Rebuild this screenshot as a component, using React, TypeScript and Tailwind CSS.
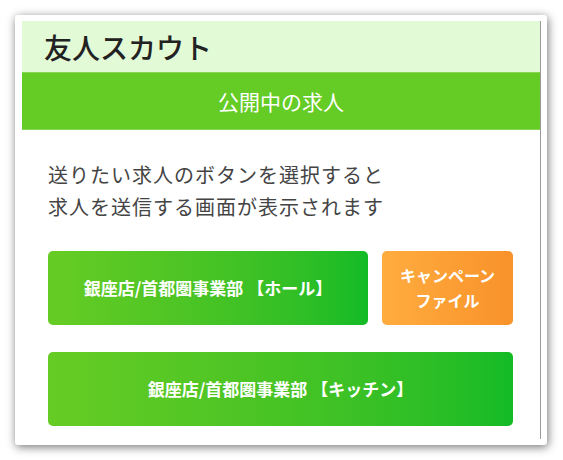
export default function App() {
  const jp = { fontFamily: '"Noto Sans CJK JP", "Noto Sans", sans-serif' };

  return (
    <div className="min-h-[460px] w-[563px] bg-white pl-[15px] pt-[15px]" style={jp}>
      <div className="h-[430px] w-[532px] rounded-[3px] bg-white pl-[7px] pt-[6px] shadow-[1px_2px_10px_rgba(0,0,0,0.55)]">
        <div className="h-[418px] w-[519px] border-r border-[#9a9a9a]">
          <div className="flex h-[51px] items-center bg-[#e3fad6] pl-[22px] text-[28px] font-medium leading-none text-[#222]">
            友人スカウト
          </div>
          <div className="flex h-[58px] items-center justify-center border-y border-[#86d653] bg-[#64cc24] text-[21px] leading-none text-white">
            公開中の求人
          </div>
          <div className="pl-[26px] pr-[27px] pt-[29px]">
            <p className="text-[20px] leading-[32px] tracking-[0.05em] text-[#444]">
              送りたい求人のボタンを選択すると
              <br />
              求人を送信する画面が表示されます
            </p>
            <div className="mt-[28px] flex gap-[14px]">
              <button className="flex h-[74px] w-[320px] items-center justify-center rounded-[5px] bg-gradient-to-r from-[#66cc24] to-[#12bb26] text-[17px] font-bold text-white">
                銀座店/首都圏事業部 【ホール】
              </button>
              <button className="flex h-[74px] w-[131px] flex-col items-center justify-center rounded-[5px] bg-gradient-to-r from-[#ffac3e] to-[#f8922a] text-[16px] font-bold leading-[25px] text-white">
                <span>キャンペーン</span>
                <span>ファイル</span>
              </button>
            </div>
            <button className="mt-[27px] flex h-[74px] w-[465px] items-center justify-center rounded-[5px] bg-gradient-to-r from-[#66cc24] to-[#12bb26] text-[17px] font-bold text-white">
              銀座店/首都圏事業部 【キッチン】
            </button>
          </div>
        </div>
      </div>
    </div>
  );
}
